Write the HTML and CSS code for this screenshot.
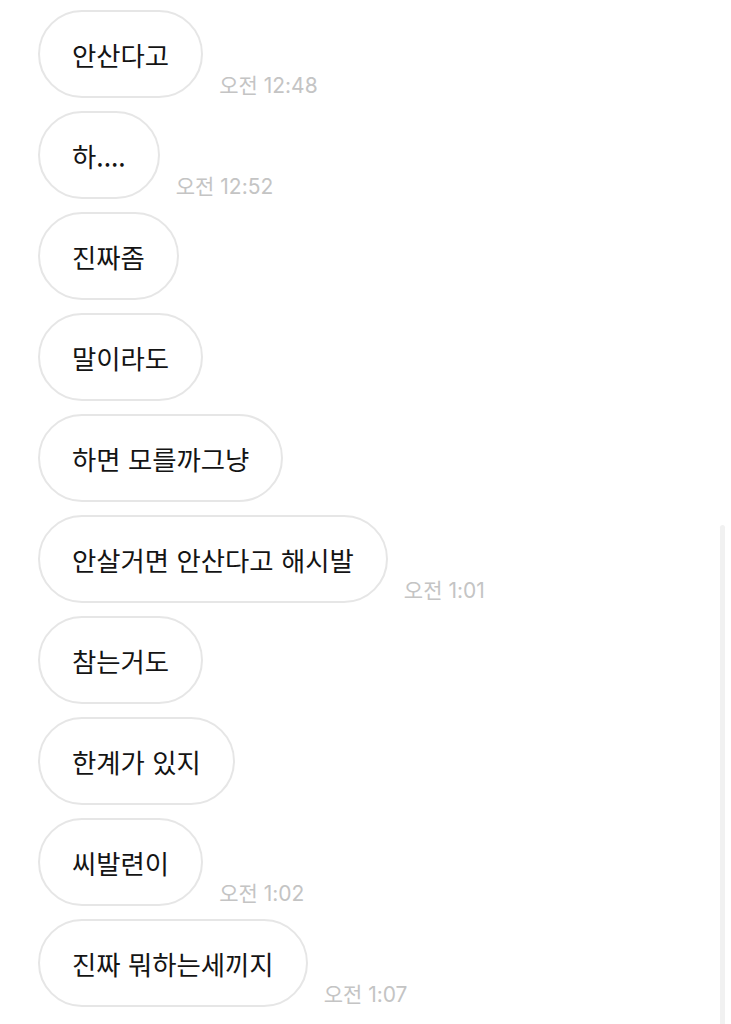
FILE: index.html
```html
<!DOCTYPE html>
<html lang="ko">
<head>
<meta charset="utf-8">
<link rel="stylesheet" href="styles.css">
</head>
<body>
<div class="chat">
  <div class="row"><div class="bubble">안산다고</div><span class="time">오전 12:48</span></div>
  <div class="row"><div class="bubble">하....</div><span class="time">오전 12:52</span></div>
  <div class="row"><div class="bubble">진짜좀</div></div>
  <div class="row"><div class="bubble">말이라도</div></div>
  <div class="row"><div class="bubble">하면 모를까그냥</div></div>
  <div class="row"><div class="bubble">안살거면 안산다고 해시발</div><span class="time">오전 1:01</span></div>
  <div class="row"><div class="bubble">참는거도</div></div>
  <div class="row"><div class="bubble">한계가 있지</div></div>
  <div class="row"><div class="bubble">씨발련이</div><span class="time">오전 1:02</span></div>
  <div class="row"><div class="bubble">진짜 뭐하는세끼지</div><span class="time">오전 1:07</span></div>
</div>
<div class="scrollbar"></div>
</body>
</html>
```
FILE: styles.css
```css
html, body {
  margin: 0;
  padding: 0;
  background: #ffffff;
  height: 1024px;
  overflow: hidden;
}
body {
  font-family: "Noto Sans CJK KR", "Noto Sans", sans-serif;
  position: relative;
}
.chat {
  display: flex;
  flex-direction: column;
  gap: 13px;
  padding: 10px 0 0 38px;
}
.row {
  display: flex;
  align-items: flex-end;
  gap: 16px;
}
.bubble {
  box-sizing: border-box;
  height: 88px;
  padding: 0 32px;
  border: 2px solid #e6e6e6;
  border-radius: 44px;
  display: flex;
  align-items: center;
  font-size: 26.4px;
  color: #141414;
  white-space: nowrap;
}
.time {
  font-family: Inter, "Noto Sans CJK KR", sans-serif;
  font-size: 21px;
  color: #c4c4c4;
  line-height: 1;
  padding-bottom: 2px;
  white-space: nowrap;
}
.scrollbar {
  position: absolute;
  left: 720px;
  top: 525px;
  width: 5px;
  bottom: 0;
  background: #f1f1f1;
  border-radius: 3px 3px 0 0;
}
```
